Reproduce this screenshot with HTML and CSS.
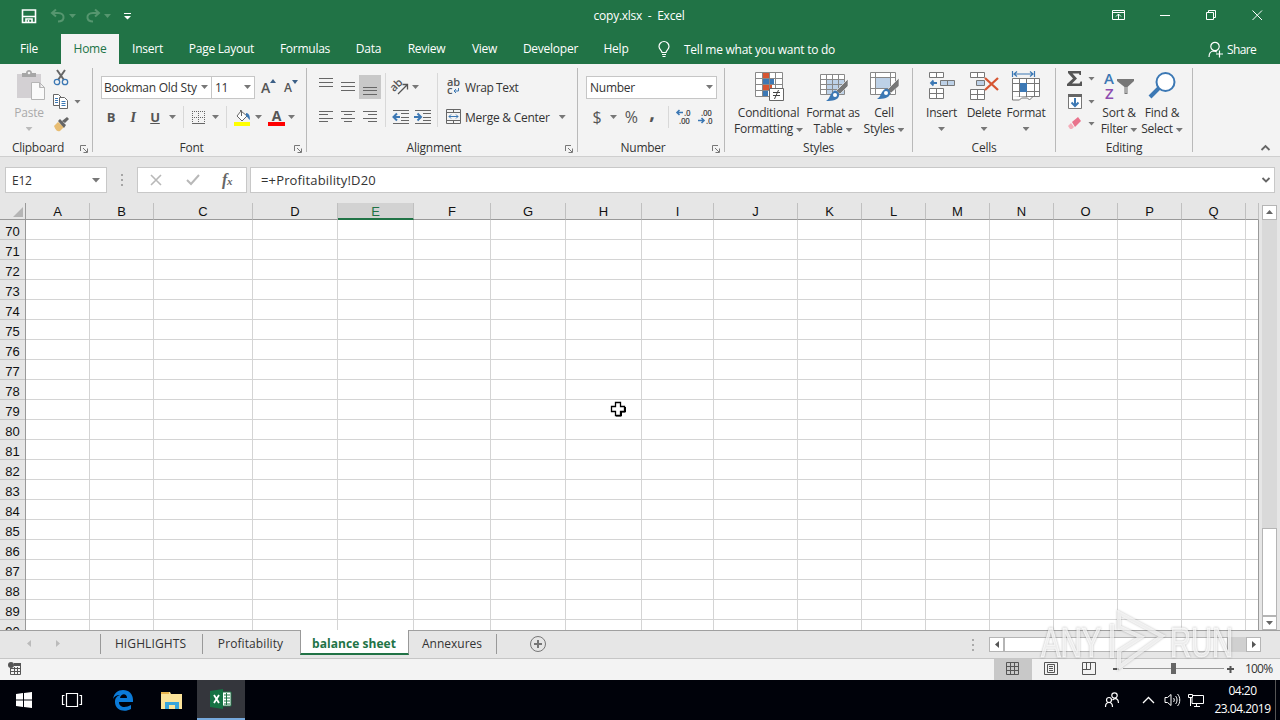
FILE: index.html
```
<!DOCTYPE html>
<html lang="en">
<head>
  <meta charset="UTF-8" />
  <title>copy.xlsx - Excel</title>
  <link rel="stylesheet" href="styles.css">
</head>
<body>
  <div class="screen">
    <header class="titlebar">
      <div class="quick">
        <svg class="save" width="16" height="16" fill="none" stroke="#fff" stroke-width="1.6"><path d="M1.500 2h13v12.500h-13zM2 8.500h12"/><path d="M5 14v-3h6v3M7.500 12v2"/></svg>
        <svg class="undo" width="16" height="16" fill="none" stroke="#56966f" stroke-width="2"><path d="M6 1.500L2 5l4 3.500M2 5h6c4 0 6 2 5.500 5S11 13.500 8 13.500"/></svg>
        <i class="arrow dim"></i>
        <svg class="redo" width="16" height="16" fill="none" stroke="#56966f" stroke-width="2"><path d="M10 1.500L14 5l-4 3.500M14 5H8c-4 0-6 2-5.500 5S5 13.500 8 13.500"/></svg>
        <i class="arrow dim"></i>
        <svg class="more" width="7" height="7" fill="#fff"><path d="M0 0h7v1H0zM0 3h7L3.500 6.500z"/></svg>
      </div>
      <div class="doc-title">copy.xlsx&nbsp; - &nbsp;Excel</div>
      <div class="window-buttons">
        <svg width="46" height="32" fill="none" stroke="#fff"><path d="M16.500 10.500h12v9h-12zM16.500 12.500h12M22.500 19v-5M20 16.500l2.500-2.500 2.500 2.500"/></svg>
        <svg width="46" height="32" fill="none" stroke="#fff"><path d="M18 15.500h10"/></svg>
        <svg width="46" height="32" fill="none" stroke="#fff"><path d="M18.500 12.500h7v7h-7zM20.500 12v-1.500h7v7H26"/></svg>
        <svg width="46" height="32" fill="none" stroke="#fff"><path d="M18.500 10.500l9.500 9.500M28 10.500l-9.500 9.500"/></svg>
      </div>
    </header>

    <nav class="tabs">
      <span class="tab file">File</span>
      <span class="tab home active">Home</span>
      <span class="tab insert">Insert</span>
      <span class="tab layout">Page Layout</span>
      <span class="tab formulas">Formulas</span>
      <span class="tab data">Data</span>
      <span class="tab review">Review</span>
      <span class="tab view">View</span>
      <span class="tab developer">Developer</span>
      <span class="tab help">Help</span>
      <svg class="bulb" width="13" height="17" fill="none" stroke="#fff" stroke-width="1.200"><path d="M4 11.500c0-2-3-3-3-6a5 5 0 0 1 10 0c0 3-3 4-3 6zM4 13.500h4M4.500 15.500h3"/></svg>
      <span class="tell">Tell me what you want to do</span>
      <svg class="person" width="16" height="17" fill="none" stroke="#fff" stroke-width="1.200"><circle cx="7" cy="5.500" r="4.200"/><path d="M1 16c0-4 2-6 5-6l3 1M8 13h7M11.500 9.500v7"/></svg>
      <span class="share">Share</span>
    </nav>

    <section class="ribbon">
      <div class="group clipboard">
        <div class="body">
          <div class="big paste">
            <svg width="30" height="31"><path d="M1 4h24v24H1z" fill="#d3d0d3"/><path d="M6 3h4c0-4 6-4 6 0h4v4H6z" fill="#a6a6a6"/><circle cx="13" cy="3" r="1.300" fill="#f3f3f3"/><path d="M15.500 12.500h8l5 5v12h-13zM23.500 12.500v5h5" fill="#fafafa" stroke="#b5b5b5"/></svg>
            <span>Paste</span>
            <i class="arrow pale"></i>
          </div>
          <div class="clips">
            <div class="line"><svg width="16" height="16" fill="none"><path d="M4 0l7 10M12 0L5 10" stroke="#666" stroke-width="2"/><circle cx="4" cy="12" r="2.700" stroke="#3c78b4" stroke-width="1.300"/><circle cx="12" cy="12" r="2.700" stroke="#3c78b4" stroke-width="1.300"/></svg></div>
            <div class="line"><svg width="16" height="16" fill="#fff" stroke="#666"><path d="M.5.5h5l3 3v8h-8z"/><path d="M2 4.500h3M2 6.500h3M2 8.500h3" stroke="#3c78b4"/><path d="M6.500 3.500h5l3 3v8h-8z"/><path d="M8.500 7.500h4M8.500 9.500h4M8.500 11.500h4" stroke="#3c78b4"/></svg><i class="arrow"></i></div>
            <div class="line"><svg width="16" height="16"><path d="M1 9l4-4 6 5-4 4c-2 1-4 0-6-5z" fill="#e8bd73"/><path d="M5 4l2-2 6 6-2 3zM9 4l5-4 2 2-4 4z" fill="#666"/></svg></div>
          </div>
        </div>
        <div class="label"><span>Clipboard</span><svg class="launcher" width="8" height="8" fill="none" stroke="#777"><path d="M.5 6V.5H6M3 3l4 4M7.500 3.500v4h-4"/></svg></div>
      </div>

      <div class="group font">
        <div class="body rows">
          <div class="tools">
            <div class="combo face"><span>Bookman Old Sty</span><i class="arrow"></i></div>
            <div class="combo size"><span>11</span><i class="arrow"></i></div>
            <div class="tool grow"><b>A</b><svg width="6" height="4" fill="#3c5f86"><path d="M0 4l3-4 3 4z"/></svg></div>
            <div class="tool shrink"><b>A</b><svg width="6" height="4" fill="#3c5f86"><path d="M0 0h6L3 4z"/></svg></div>
          </div>
          <div class="tools">
            <b class="tool letter">B</b>
            <b class="tool letter italic">I</b>
            <b class="tool letter under">U</b>
            <i class="arrow a-under"></i>
            <i class="split"></i>
            <svg class="borders" width="15" height="15" fill="none" stroke="#666"><path d="M1 1.500h13M1.500 1v13M7.500 1v13M13.500 1v13M1 7.500h13" stroke-dasharray="1 1"/><path d="M1 13.500h13"/></svg>
            <i class="arrow a-borders"></i>
            <i class="split"></i>
            <svg class="fill" width="18" height="17"><path d="M7 2l6 5-5 5-5-5z" fill="#fff" stroke="#666"/><path d="M7.500 7V1.500H6" fill="none" stroke="#666"/><path d="M12 4c3 0 4 3 4 7-2-1-2-3-4-4z" fill="#3c78b4"/><path d="M0 13h16v4H0z" fill="#ff0"/></svg>
            <i class="arrow a-fill"></i>
            <div class="tool color"><b>A</b></div>
            <i class="arrow a-color"></i>
          </div>
        </div>
        <div class="label"><span>Font</span><svg class="launcher" width="8" height="8" fill="none" stroke="#777"><path d="M.5 6V.5H6M3 3l4 4M7.500 3.500v4h-4"/></svg></div>
      </div>

      <div class="group alignment">
        <div class="body">
          <div class="aligns">
            <svg width="22" height="24" stroke="#666"><path d="M4 3.500h14M4 7.500h14M4 11.500h14"/></svg>
            <svg width="22" height="24" stroke="#666"><path d="M4 7.500h14M4 11.500h14M4 15.500h14"/></svg>
            <svg class="on" width="22" height="24" stroke="#666"><path d="M4 12.500h14M4 15.500h14M4 19.500h14"/></svg>
            <svg width="22" height="24" stroke="#666"><path d="M4 6.500h14M4 9.500h9M4 13.500h14M4 16.500h9"/></svg>
            <svg width="22" height="24" stroke="#666"><path d="M4 6.500h14M7 9.500h8M4 13.500h14M7 16.500h8"/></svg>
            <svg width="22" height="24" stroke="#666"><path d="M4 6.500h14M9 9.500h9M4 13.500h14M9 16.500h9"/></svg>
          </div>
          <i class="split tall"></i>
          <div class="indents">
            <div class="line"><svg width="18" height="18" fill="none" stroke="#555"><text class="ab" x="-1" y="9" transform="rotate(-45 7 8)">ab</text><path d="M6 16l9-9M10.500 6.500h5v5" stroke-width="1.300"/></svg><i class="arrow"></i></div>
            <div class="line pair">
              <svg width="18" height="16" stroke="#666"><path d="M1 1.500h16M9 4.500h8M9 8.500h8M9 11.500h8M1 14.500h16"/><path d="M1 8h7M5 4.500L1.500 8 5 11.500" fill="none" stroke="#3c78b4" stroke-width="2"/></svg>
              <svg width="18" height="16" stroke="#666"><path d="M1 1.500h16M9 4.500h8M9 8.500h8M9 11.500h8M1 14.500h16"/><path d="M0 8h7M3.500 4.500L7 8l-3.500 3.500" fill="none" stroke="#3c78b4" stroke-width="2"/></svg>
            </div>
          </div>
          <i class="split tall"></i>
          <div class="merges">
            <div class="line"><svg width="16" height="18"><text class="wrap-ab" x="2" y="8">ab</text><text class="wrap-ab" x="2" y="16">c</text><path d="M13.500 10v3H9M11 11l-2 2 2 2" fill="none" stroke="#3c78b4"/></svg><span class="wrap-text">Wrap Text</span></div>
            <div class="line"><svg width="16" height="16" fill="none" stroke="#666"><path d="M1.500.5h14v14h-14zM1.500 3.500h14M1.500 11.500h14M8.500 0v3M8.500 12v3"/><path d="M4 7.500h9M6 5.500l-2 2 2 2M11 5.500l2 2-2 2" stroke="#3c78b4"/></svg><span class="merge-text">Merge &amp; Center</span><i class="arrow"></i></div>
          </div>
        </div>
        <div class="label"><span>Alignment</span><svg class="launcher" width="8" height="8" fill="none" stroke="#777"><path d="M.5 6V.5H6M3 3l4 4M7.500 3.500v4h-4"/></svg></div>
      </div>

      <div class="group number">
        <div class="body rows">
          <div class="tools"><div class="combo format"><span>Number</span><i class="arrow"></i></div></div>
          <div class="tools">
            <span class="tool sign">$</span>
            <i class="arrow"></i>
            <span class="tool percent">%</span>
            <b class="tool comma">,</b>
            <i class="split"></i>
            <svg class="decimal" width="16" height="16"><text x="8" y="7">.0</text><text x="3" y="15">.00</text><path d="M7 3.500H1M3.500 1L1 3.500 3.500 6" fill="none" stroke="#3c78b4" stroke-width="1.600"/></svg>
            <svg class="decimal" width="16" height="16"><text x="3" y="7">.00</text><text x="8" y="15">.0</text><path d="M0 11.500h6M3.500 9L6 11.500 3.500 14" fill="none" stroke="#3c78b4" stroke-width="1.600"/></svg>
          </div>
        </div>
        <div class="label"><span>Number</span><svg class="launcher" width="8" height="8" fill="none" stroke="#777"><path d="M.5 6V.5H6M3 3l4 4M7.500 3.500v4h-4"/></svg></div>
      </div>

      <div class="group styles">
        <div class="body">
          <div class="big conditional">
            <svg width="30" height="31"><path d="M1.500 2.500h27v24h-27z" fill="#fff"/><path d="M9 3h6v6H9zM9 15h9v6H9z" fill="#d65532"/><path d="M9 9h11v6H9zM9 21h5v5H9z" fill="#3c78b4"/><path d="M1.500 2.500h27v24h-27zM1.500 8.500h27M1.500 14.500h27M1.500 20.500h27M8.500 2v24M15.500 2v24M21.500 2v24" fill="none" stroke="#888"/><path d="M15.500 18.500h14v12h-14z" fill="#fff" stroke="#666"/><path d="M19 22.500h7M19 25.500h7M24.500 20l-4 9" stroke="#444"/></svg>
            <span>Conditional</span><span>Formatting<i class="arrow"></i></span>
          </div>
          <div class="big table">
            <svg width="30" height="31"><path d="M2.500 4.500h24v20h-24z" fill="#fff"/><path d="M9 10h17v14H9z" fill="#bdd1e7"/><path d="M2.500 4.500h24v20h-24zM2.500 9.500h24M2.500 14.500h24M2.500 19.500h24M8.500 4v20M14.500 4v20M20.500 4v20" fill="none" stroke="#888"/><path d="M30 9v7l-8 8-4-3z" fill="#777" stroke="#fff" stroke-width=".6"/><path d="M16 21c3-1 6 2 5 5-1 4-6 5-13 5 4-2 4-8 8-10z" fill="#3c78b4"/><circle cx="17" cy="25" r="2" fill="#fff"/></svg>
            <span>Format as</span><span>Table<i class="arrow"></i></span>
          </div>
          <div class="big cell">
            <svg width="30" height="31"><path d="M1.500 2.500h25v22h-25z" fill="#fff"/><path d="M6 8h15v10H6z" fill="#bdd1e7"/><path d="M1.500 2.500h25v22h-25zM1.500 7.500h25M1.500 18.500h25M6.500 2v22M21.500 2v22" fill="none" stroke="#888"/><path d="M30 8v8l-8 7-4-3z" fill="#777" stroke="#fff" stroke-width=".6"/><path d="M16 19c3-1 6 2 5 5-1 4-6 5-13 5 4-2 4-8 8-10z" fill="#3c78b4"/><circle cx="17" cy="23" r="2" fill="#fff"/></svg>
            <span>Cell</span><span>Styles<i class="arrow"></i></span>
          </div>
        </div>
        <div class="label"><span>Styles</span></div>
      </div>

      <div class="group cells">
        <div class="body">
          <div class="big ins">
            <svg width="30" height="31" fill="#fff" stroke="#777"><path d="M2.500 2.500h14v5h-14zM9.500 2.500v5M2.500 18.500h14v10h-14zM9.500 18v10M2.500 23.500h14"/><path d="M13.500 10.500h14v5h-14zM20.500 10.500v5" fill="#bdd1e7"/><path d="M10 13H4M6.500 10.500L4 13l2.500 2.500" fill="none" stroke="#3c78b4" stroke-width="1.800"/></svg>
            <span>Insert</span><i class="arrow"></i>
          </div>
          <div class="big del">
            <svg width="30" height="31" fill="#fff" stroke="#777"><path d="M1.500 2.500h14v5h-14zM8.500 2.500v5M1.500 19.500h14v10h-14zM8.500 19v10M1.500 24.500h14"/><path d="M7.500 10.500h8v5h-8z" fill="#bdd1e7"/><path d="M16 8l13 12M29 8L16 20" stroke="#d65532" stroke-width="2.300"/></svg>
            <span>Delete</span><i class="arrow"></i>
          </div>
          <div class="big fmt">
            <svg width="30" height="31" fill="#fff" stroke="#777"><path d="M1.500 8.500h27v18h-27z"/><path d="M2 13.500h26M2 21.500h26M8.500 8v19M15.500 8v19M23.500 8v19M1.500 26v4h7l2-2h6l2 2 3-3"/><path d="M9 13h7v9H9z" fill="#3c78b4" stroke="none"/><path d="M1.500 1v6M23.500 1v6M3 4h19M6 1.500L3 4l3 2.500M19 1.500L22 4l-3 2.500" fill="none" stroke="#3c78b4" stroke-width="1.200"/></svg>
            <span>Format</span><i class="arrow"></i>
          </div>
        </div>
        <div class="label"><span>Cells</span></div>
      </div>

      <div class="group editing">
        <div class="body">
          <div class="edits">
            <div class="line sum"><svg width="16" height="16"><path d="M1 0h13v4h-1.500L12 2.500H5.500L10 7.500l-5 5h7.500l1-2H15V15H0v-2l6-5.500L1 2z" fill="#555"/></svg><i class="arrow"></i></div>
            <div class="line"><svg width="16" height="16"><path d="M1.500.5h13v14h-13z" fill="#fff" stroke="#777"/><path d="M1 0h14v3H1z" fill="#666"/><path d="M8 4v8M4.500 8.500L8 12l3.500-3.500" fill="none" stroke="#3c78b4" stroke-width="2"/></svg><i class="arrow"></i></div>
            <div class="line"><svg width="16" height="16"><path d="M5 6l6-5 3 4-6 6z" fill="#e9738c"/><path d="M4 7l3 4-2 2H3l-2-3z" fill="#f4adb9"/></svg><i class="arrow"></i></div>
          </div>
          <div class="big sort">
            <svg width="30" height="31"><text x="0" y="14" class="sort-a">A</text><text x="1" y="29" class="sort-z">Z</text><path d="M13 9h17v2l-6.500 6v7h-3v-7L13 11z" fill="#777"/><path d="M22 17v6" stroke="#ddd"/></svg>
            <span>Sort &amp;</span><span>Filter<i class="arrow"></i></span>
          </div>
          <div class="big find">
            <svg width="30" height="31"><path d="M12 18L3 27" stroke="#3c78b4" stroke-width="4"/><circle cx="18.500" cy="12" r="9" fill="#fff" stroke="#3c78b4" stroke-width="2"/></svg>
            <span>Find &amp;</span><span>Select<i class="arrow"></i></span>
          </div>
        </div>
        <div class="label"><span>Editing</span></div>
      </div>
      <svg class="collapse" width="9" height="6" fill="none" stroke="#666" stroke-width="1.800"><path d="M.5 5l4-4 4 4"/></svg>
    </section>

    <section class="formula-bar">
      <div class="name-box"><span>E12</span><svg width="8" height="5" fill="#777"><path d="M0 0h8L4 4.500z"/></svg></div>
      <svg class="dots" width="3" height="12" fill="#a5a5a5"><path d="M0 0h2v2H0zM0 5h2v2H0zM0 10h2v2H0z"/></svg>
      <div class="entry">
        <svg width="12" height="12" fill="none" stroke="#b8b8b8" stroke-width="1.600"><path d="M1 1l10 10M11 1L1 11"/></svg>
        <svg width="14" height="12" fill="none" stroke="#b8b8b8" stroke-width="2"><path d="M1 6l4 4 8-9"/></svg>
        <span class="fx">f<small>x</small></span>
      </div>
      <div class="formula"><span>=+Profitability!D20</span><svg width="8" height="6" fill="none" stroke="#666" stroke-width="1.800"><path d="M.5 1L4 4.500 7.500 1"/></svg></div>
    </section>

    <main class="sheet">
      <div class="row-heads">
        <div class="corner"><svg width="10" height="10" fill="#b5b5b5"><path d="M10 0v10H0z"/></svg></div>
        <div>70</div><div>71</div><div>72</div><div>73</div><div>74</div><div>75</div><div>76</div>
        <div>77</div><div>78</div><div>79</div><div>80</div><div>81</div><div>82</div><div>83</div>
        <div>84</div><div>85</div><div>86</div><div>87</div><div>88</div><div>89</div><div>90</div>
      </div>
      <div class="columns">
        <div class="col"><span>A</span></div>
        <div class="col"><span>B</span></div>
        <div class="col"><span>C</span></div>
        <div class="col"><span>D</span></div>
        <div class="col selected"><span>E</span></div>
        <div class="col"><span>F</span></div>
        <div class="col"><span>G</span></div>
        <div class="col"><span>H</span></div>
        <div class="col"><span>I</span></div>
        <div class="col"><span>J</span></div>
        <div class="col"><span>K</span></div>
        <div class="col"><span>L</span></div>
        <div class="col"><span>M</span></div>
        <div class="col"><span>N</span></div>
        <div class="col"><span>O</span></div>
        <div class="col"><span>P</span></div>
        <div class="col"><span>Q</span></div>
        <div class="col"><span></span></div>
      </div>
      <div class="vscroll">
        <div class="button"><svg width="7" height="4" fill="#666"><path d="M0 4l3.500-4L7 4z"/></svg></div>
        <div class="track"><div class="thumb"></div></div>
        <div class="button"><svg width="7" height="4" fill="#666"><path d="M0 0h7L3.500 4z"/></svg></div>
      </div>
    </main>

    <footer class="sheet-tabs">
      <div class="tab-nav"><svg width="4" height="7" fill="#bbb"><path d="M4 0v7L0 3.500z"/></svg><svg width="4" height="7" fill="#bbb"><path d="M0 0v7l4-3.500z"/></svg></div>
      <div class="sheet-tab highlights">HIGHLIGHTS</div>
      <div class="sheet-tab profitability">Profitability</div>
      <div class="sheet-tab current">balance sheet</div>
      <div class="sheet-tab annexures">Annexures</div>
      <svg class="add" width="17" height="17" fill="none" stroke="#777"><circle cx="8" cy="8" r="7.500"/><path d="M4 8h8M8 4v8" stroke-width="2"/></svg>
      <svg class="grip" width="3" height="12" fill="#aaa"><path d="M0 0h2v2H0zM0 5h2v2H0zM0 10h2v2H0z"/></svg>
      <div class="hscroll">
        <div class="button"><svg width="4" height="7" fill="#555"><path d="M4 0v7L0 3.500z"/></svg></div>
        <div class="thumb"></div>
        <div class="track"></div>
        <div class="button"><svg width="4" height="7" fill="#555"><path d="M0 0v7l4-3.500z"/></svg></div>
      </div>
    </footer>

    <div class="status">
      <svg class="macro" width="14" height="14" fill="none" stroke="#555"><path d="M2.500 6v6.500h10v-10H7M3 6.500h9M3 9.500h9M6.500 5v7M9.500 5v7"/><path d="M6 1h7v3H6z" fill="#555" stroke="none"/><circle cx="3" cy="3" r="3" fill="#555" stroke="none"/></svg>
      <div class="view on"><svg width="13" height="13" fill="none" stroke="#555"><path d="M.5.5h12v12H.500zM.5 4.500h12M.5 8.500h12M4.500 0v13M8.500 0v13"/></svg></div>
      <div class="view"><svg width="14" height="13" fill="none" stroke="#555"><path d="M.5.5h13v12H.500zM3.500 2.500h7v8h-7zM5 4.500h4M5 6.500h4M5 8.500h4"/></svg></div>
      <div class="view"><svg width="14" height="13" fill="none" stroke="#555"><path d="M.5.5h13v12H.500zM.5 7.500h8v-7M4.500 0v7"/></svg></div>
      <svg class="zoom" width="120" height="13"><path d="M0 6h6v2H0zM114 6h7v2h-7zM116.500 4h2v7h-2z" fill="#555"/><path d="M10 6.500h101" stroke="#999"/><path d="M58 1h5v11h-5z" fill="#666"/></svg>
      <span>100%</span>
    </div>

    <div class="taskbar">
      <div class="app start"><svg width="16" height="16" fill="#fff"><path d="M0 2l7-1v6.500H0zM8 1l8-1v7.500H8zM0 8.500h7V15l-7-1zM8 8.500h8V16l-8-1z"/></svg></div>
      <div class="app task-view"><svg width="20" height="15" fill="none" stroke="#fff" stroke-width="1.200"><path d="M4.500.5h11v13h-11zM2.500 2.500h-2v9h2M17.500 2.500h2v9h-2"/></svg></div>
      <div class="app"><svg width="20" height="21" fill="#0b7bd8"><path d="M0 9C1 3 5 0 10 0c6 0 10 4 10 10v2H6c0 6 7 6 12 3v4c-7 4-16 1-16-7 0-4 2-6 5-7-4 0-6 2-7 4zM7 8h7c0-5-6-5-7 0z"/></svg></div>
      <div class="app"><svg width="22" height="19"><path d="M0 1h9l1 2h11v15H0z" fill="#fbe39a"/><path d="M0 1h8v2H0z" fill="#e8b44d"/><path d="M4 11h14v7h-4v-4H8v4H4z" fill="#38a5dc"/></svg></div>
      <div class="app running"><svg width="22" height="20"><path d="M11 3h10v14H11z" fill="#fff" stroke="#217346"/><path d="M14 6h6M14 9h6M14 12h6M14 15h6M16.500 4v12" stroke="#217346"/><path d="M0 2l13-2v20L0 18z" fill="#167244"/><path d="M4 6l5 8M9 6l-5 8" stroke="#fff" stroke-width="1.800"/></svg></div>
      <div class="tray">
        <svg width="16" height="16" fill="none" stroke="#fff" stroke-width="1.200"><circle cx="10.500" cy="3.500" r="2.700"/><circle cx="5" cy="8" r="2.500"/><path d="M1.500 15c0-6 7-6 7 0M8.500 8c3-3 6-1 6 3"/></svg>
        <svg class="up" width="13" height="8" fill="none" stroke="#fff" stroke-width="1.300"><path d="M1 7l5.500-5.500L12 7"/></svg>
        <svg class="sound" width="17" height="14" fill="none" stroke="#fff"><path d="M1 4.500h2.500l3.500-3v11l-3.500-3H1zM9.500 5c1 1 1 3 0 4M11.500 3c2 2 2 6 0 8M13.500 1c3 3 3 9 0 12"/></svg>
        <svg class="net" width="17" height="14" fill="none" stroke="#fff"><path d="M5 2.500h10.500v8H4V5M8.500 10v3M6 13.500h6M.5 1.500h4v3h-4zM2.500 5v8"/></svg>
      </div>
      <div class="clock">04:20<br>23.04.2019</div>
      <div class="peek"></div>
    </div>

    <svg class="pointer" width="16" height="16"><path d="M5.500 1.500h5v4h4v5h-4v4h-5v-4h-4v-5h4z" fill="#fff" stroke="#000" stroke-width="1.300"/><path d="M6 15h5.500v-4h4V6" fill="none" stroke="#000"/></svg>
    <svg class="watermark" width="200" height="66"><g class="mark"><text x="2" y="49" textLength="60" lengthAdjust="spacingAndGlyphs">ANY</text><path d="M73 16v34M80 22V5l43 23-43 31V43l22-14-22-10"/><text x="131" y="49" textLength="63" lengthAdjust="spacingAndGlyphs">RUN</text></g></svg>
  </div>
</body>
</html>
```
FILE: styles.css
```
* {
  box-sizing: border-box;
}

body {
  margin: 0;
  font-family: 'Open Sans', 'Noto Sans', sans-serif;
  font-size: 12px;
  letter-spacing: -0.25px;
  color: #333;
}

svg {
  display: block;
  flex: none;
  overflow: visible;
}

.screen {
  position: relative;
  display: flex;
  flex-direction: column;
  width: 1280px;
  height: 720px;
  overflow: hidden;
  background: #e6e6e6;
  white-space: nowrap;
}

.arrow {
  flex: none;
  width: 7px;
  height: 4px;
  background: #777;
  clip-path: polygon(0 0, 100% 0, 50% 100%);
}

.arrow.dim { background: #56966f; }
.arrow.pale { background: #bbb; }

/* title bar */
.titlebar {
  display: flex;
  height: 32px;
  background: #217346;
  color: #fff;
}

.quick {
  display: flex;
  align-items: center;
  width: 556px;
  padding-left: 21px;
}

.undo { margin-left: 13px; }
.quick .arrow { margin-left: 3px; }
.redo { margin-left: 9px; }
.more { margin-left: 13px; }

.doc-title {
  width: 166px;
  line-height: 32px;
  text-align: center;
}

.window-buttons {
  display: flex;
  margin-left: auto;
}

/* ribbon tabs */
.tabs {
  display: flex;
  align-items: center;
  height: 32px;
  padding-top: 2px;
  background: #217346;
  color: #fff;
}

.tab {
  height: 30px;
  line-height: 30px;
  text-align: center;
}

.tab.active {
  margin-left: 3px;
  background: #f3f3f3;
  color: #217346;
}

.file, .home { width: 58px; }
.insert { width: 57px; }
.layout { width: 91px; }
.formulas { width: 76px; }
.data, .view.tab { width: 51px; }
.review { width: 65px; }
.developer { width: 81px; }
.help { width: 50px; }
.bulb { margin-left: 17px; }
.tell { margin-left: 13px; }
.person { margin-left: auto; }

.share {
  width: 56px;
  padding-left: 3px;
  letter-spacing: -0.6px;
}

/* ribbon */
.ribbon {
  display: flex;
  height: 93px;
  padding-top: 4px;
  background: #f3f3f3;
  border-bottom: 1px solid #cfcfcf;
}

.group {
  height: 84px;
  border-right: 1px solid #b9b9b9;
}

.clipboard { width: 93px; }
.font { width: 214px; }
.alignment { width: 271px; }
.number { width: 147px; }
.styles { width: 188px; }
.cells { width: 143px; }
.editing { width: 137px; }

.body {
  display: flex;
  height: 73px;
}

.body.rows {
  flex-direction: column;
  padding-top: 4px;
}

.label {
  display: flex;
  height: 14px;
  line-height: 14px;
}

.label span {
  flex: 1;
  text-align: center;
}

.launcher { margin: 4px 4px 0; }

.big {
  display: flex;
  flex-direction: column;
  align-items: center;
  padding-top: 2px;
  line-height: 16px;
}

.big svg { margin-bottom: 4px; }
.big > .arrow { margin-top: 6px; }

.big span .arrow {
  display: inline-block;
  margin: 0 0 1px 3px;
}

.line {
  display: flex;
  align-items: center;
}

.paste {
  width: 58px;
  color: #aaa;
}

.paste svg { margin-left: 3px; }
.clips { width: 36px; margin-left: -5px; }
.clips .line { height: 23px; }
.clips .line:first-child svg { margin-top: -3px; }
.clips .line:nth-child(2) { margin-top: -1px; }
.clips .arrow { margin-left: 5px; }

.tools {
  display: flex;
  align-items: center;
  height: 30px;
}

.tool {
  flex: none;
  text-align: center;
  color: #555;
}

.combo {
  display: flex;
  align-items: center;
  justify-content: space-between;
  height: 23px;
  padding: 0 3px;
  background: #fff;
  border: 1px solid #c6c6c6;
}

.face { width: 111px; margin-left: 8px; padding-left: 2px; }
.size { width: 44px; margin-left: -1px; }
.format { width: 131px; margin-left: 8px; }

.grow, .shrink {
  display: flex;
  width: 15px;
  margin-left: 6px;
  font-size: 14px;
}

.shrink { margin-left: 8px; font-size: 12px; }
.grow svg, .shrink svg { margin-top: 1px; }

.grow b, .shrink b { font-weight: 600; }

.letter {
  width: 22px;
  font-size: 13px;
}

.letter:first-child { margin-left: 7px; }
.italic { font-family: 'Liberation Serif', serif; font-style: italic; font-size: 15px; }
.under { text-decoration: underline; }
.a-under { margin: 0 7px 0 3px; }

.split {
  flex: none;
  width: 1px;
  height: 22px;
  background: #d8d8d8;
}

.borders { margin-left: 7px; }
.a-borders { margin: 0 7px 0 6px; }
.fill { margin-left: 7px; }
.a-fill { margin: 0 6px 0 3px; }

.color {
  width: 17px;
  height: 17px;
  border-bottom: 4px solid #f00;
  font-size: 14px;
  line-height: 13px;
}

.a-color { margin-left: 3px; }

.aligns {
  display: grid;
  grid-template-columns: repeat(3, 22px);
  grid-auto-rows: 24px;
  row-gap: 6px;
  width: 66px;
  margin: 7px 4px 0 8px;
}

.on { background: #c8c8c8; }

.split.tall {
  height: 54px;
  margin-top: 5px;
}

.indents {
  width: 51px;
  padding: 4px 0 0 6px;
}

.indents .line, .merges .line { height: 30px; }
.indents .arrow { margin-left: 2px; }
.pair { gap: 4px; }

.ab {
  font-size: 11px;
  font-weight: 600;
  fill: #555;
  stroke: none;
}

.wrap-ab {
  font-size: 11px;
  font-weight: 600;
  fill: #555;
}

.merges { padding: 4px 0 0 7px; }
.wrap-text, .merge-text { margin-left: 4px; }
.wrap-text { letter-spacing: -0.4px; }
.merges .arrow { margin-left: 9px; }

.sign {
  width: 18px;
  margin-left: 10px;
  font-size: 16px;
}

.number .tools > .arrow { margin-left: 4px; }
.percent { width: 20px; margin-left: 4px; font-size: 16px; letter-spacing: -0.6px; }
.comma { width: 12px; margin: -12px 10px 0 5px; font-size: 20px; }

.decimal {
  margin-left: 7px;
  font-size: 8px;
  font-weight: 600;
  fill: #444;
}

.decimal + .decimal { margin-left: 6px; }

.conditional { width: 77px; margin-left: 5px; }
.table { width: 52px; }
.cell { width: 50px; }
.ins { width: 43px; margin-left: 7px; }
.del { width: 42px; }
.fmt { width: 42px; }

.edits {
  width: 40px;
  padding-left: 11px;
}

.edits .line { height: 23px; }
.edits .line:nth-child(n + 2) { margin-top: -1px; }
.edits .sum { margin: -1px 0 1px; }
.edits .arrow { margin-left: 5px; }
.sort { width: 46px; }
.find { width: 40px; }

.sort-a, .sort-z { font-size: 15px; font-weight: 600; fill: #3c78b4; }
.sort-z { fill: #8e4db0; }

.collapse {
  align-self: flex-end;
  margin: 0 0 5px 68px;
}

/* formula bar */
.formula-bar {
  display: flex;
  height: 46px;
  padding: 10px 5px;
}

.name-box, .entry, .formula {
  display: flex;
  align-items: center;
  height: 26px;
  background: #fff;
  border: 1px solid #c8c8c8;
}

.name-box {
  justify-content: space-between;
  width: 102px;
  padding: 0 6px;
}

.dots { margin: 7px 13px 0 14px; }

.entry {
  width: 110px;
  padding-left: 12px;
}

.entry svg + svg { margin-left: 24px; }

.fx {
  margin-left: 22px;
  font: italic bold 16px 'Liberation Serif', serif;
  color: #666;
}

.fx small { font-size: 11px; }

.formula {
  flex: 1;
  justify-content: space-between;
  margin-left: 3px;
  padding: 0 4px 0 10px;
  font-size: 13px;
  letter-spacing: 0.15px;
}

/* worksheet */
.sheet {
  display: flex;
  height: 427px;
  font: 13px 'Liberation Sans', sans-serif;
  color: #111;
  letter-spacing: 0;
}

.row-heads {
  width: 26px;
  overflow: hidden;
  border-right: 1px solid #999;
  text-align: center;
}

.row-heads div {
  height: 20px;
  border-bottom: 1px solid #c6c6c6;
  line-height: 23px;
}

.row-heads .corner {
  height: 17px;
  padding: 4px 0 0 13px;
  border-color: #999;
}

.columns {
  display: grid;
  grid-template-columns: 64px 64px 99px 85px 76px 77px 75px 76px 72px 84px repeat(7, 64px) 12px;
  width: 1233px;
  border-right: 1px solid #999;
}

.col {
  background: repeating-linear-gradient(#fff 0 19px, #d4d4d4 19px 20px) 0 17px no-repeat;
  border-right: 1px solid #d4d4d4;
}

.col:last-child { border: 0; }

.col span {
  display: block;
  height: 17px;
  margin-right: -1px;
  background: #e6e6e6;
  border-right: 1px solid #c0c0c0;
  border-bottom: 1px solid #999;
  line-height: 17px;
  text-align: center;
}

.col.selected span {
  background: #d2d2d2;
  border-bottom: 2px solid #217346;
  color: #217346;
}

.vscroll {
  display: flex;
  flex-direction: column;
  width: 15px;
  margin: 2px 0 0 3px;
}

.button {
  display: flex;
  align-items: center;
  justify-content: center;
  width: 15px;
  height: 15px;
  background: #fff;
  border: 1px solid #b5b5b5;
}

.vscroll .track {
  flex: 1;
  padding-top: 308px;
  background: #d9d9d9;
}

.vscroll .thumb {
  height: 88px;
  background: #fff;
  border: 1px solid #b5b5b5;
}

/* sheet tabs */
.sheet-tabs {
  display: flex;
  height: 28px;
  border-top: 1px solid #a0a0a0;
  letter-spacing: 0;
}

.tab-nav {
  display: flex;
  gap: 25px;
  width: 100px;
  padding: 9px 0 0 27px;
}

.sheet-tab {
  height: 20px;
  margin-top: 3px;
  border-left: 1px solid #999;
  line-height: 20px;
  text-align: center;
}

.highlights { width: 102px; padding-right: 2px; letter-spacing: 0.1px; }
.profitability { width: 98px; padding-right: 2px; letter-spacing: 0.1px; }

.current {
  width: 109px;
  height: 25px;
  margin-top: -1px;
  padding: 4px 1px 0 0;
  background: #fff;
  border-right: 1px solid #999;
  border-bottom: 2px solid #217346;
  font-weight: bold;
  letter-spacing: 0.05px;
  color: #217346;
}

.annexures {
  width: 88px;
  padding-right: 1px;
  border-left: 0;
  border-right: 1px solid #999;
}

.add { margin: 5px 0 0 33px; }
.grip { margin: 8px 14px 0 425px; }

.hscroll {
  display: flex;
  width: 272px;
  height: 15px;
  margin-top: 6px;
}

.hscroll .thumb {
  width: 224px;
  background: #fff;
  border: 1px solid #b5b5b5;
}

.hscroll .track {
  width: 18px;
  background: #d0d0d0;
}

/* status bar */
.status {
  display: flex;
  align-items: center;
  height: 22px;
  background: #f3f3f3;
  border-top: 1px solid #c6c6c6;
}

.macro { margin: -2px auto 0 8px; }

.status .view {
  display: flex;
  align-items: center;
  justify-content: center;
  width: 38px;
  height: 21px;
  padding-bottom: 2px;
}

.status .on {
  padding-right: 2px;
}

.zoom { margin: -2px 0 0 5px; }

.status span {
  width: 35px;
  margin: -3px 0 0 12px;
  letter-spacing: -0.8px;
}

/* taskbar */
.taskbar {
  display: flex;
  height: 40px;
  background: #00020a;
  color: #fff;
}

.app {
  display: flex;
  align-items: center;
  justify-content: center;
  width: 49px;
}

.start { padding-right: 1px; }
.task-view { padding-right: 3px; }

.app.running {
  width: 48px;
  margin-left: 1px;
  background: #34363c;
  border-bottom: 2px solid #76a9dc;
}

.tray {
  display: flex;
  align-items: center;
  margin-left: auto;
}

.up { margin-left: 22px; }
.sound { margin-left: 9px; }
.net { margin-left: 7px; }

.clock {
  width: 67px;
  margin: 2px -1px 0 4px;
  line-height: 18px;
  letter-spacing: -0.5px;
  text-align: center;
}

.peek {
  width: 5px;
  border-left: 1px solid #555;
}

/* things lying over the window */
.pointer {
  position: absolute;
  left: 610px;
  top: 401px;
}

.watermark {
  position: absolute;
  left: 1039px;
  top: 608px;
  font: 42px 'Liberation Sans', sans-serif;
}

.mark {
  fill: rgba(255, 255, 255, 0.7);
  stroke: rgba(255, 255, 255, 0.7);
  stroke-width: 1;
  filter: drop-shadow(0 0 1px rgba(0, 0, 0, 0.35));
}

.mark path {
  fill: none;
  stroke-width: 4;
}
```
